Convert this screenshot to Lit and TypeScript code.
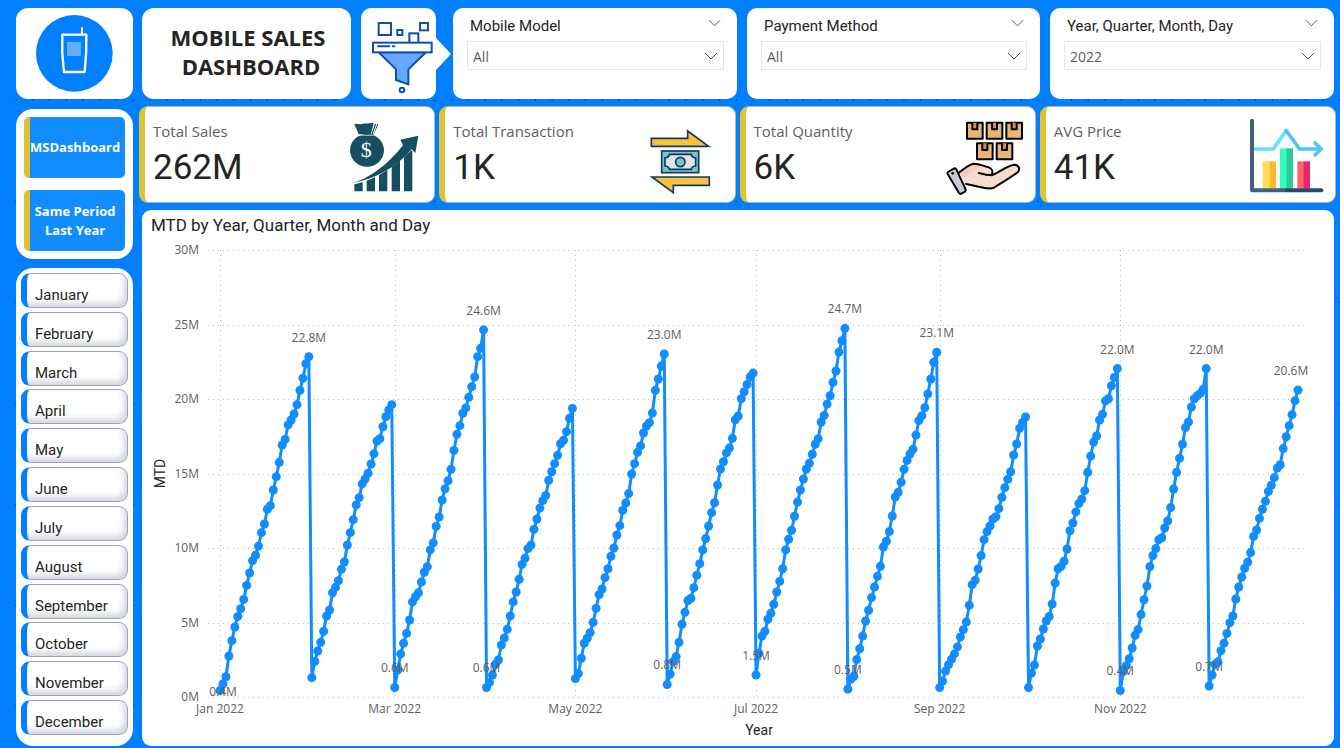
import { LitElement, html, svg, css } from "lit";
import { customElement, property, state } from "lit/decorators.js";

/* Month-to-date sales in millions, one row per month of 2022. */
const MTD: number[][] = [
  [0.43, 0.87, 1.36, 2.75, 3.78, 4.7, 5.41, 5.93, 6.55, 7.49, 8.32, 9.15, 9.51, 10.13, 11.03, 11.61, 12.6, 12.84, 13.89, 14.79, 15.75, 16.91, 17.29, 18.26, 18.59, 18.99, 19.62, 20.58, 21.39, 22.37, 22.84],
  [1.3, 2.39, 3.09, 3.67, 4.41, 5.44, 5.84, 7.0, 7.36, 7.81, 8.57, 9.06, 10.2, 11.03, 11.9, 12.89, 13.38, 14.3, 14.63, 15.01, 15.64, 16.33, 17.18, 17.34, 18.14, 18.81, 19.26, 19.62],
  [0.64, 1.81, 2.89, 3.6, 4.27, 5.17, 6.38, 6.73, 7.0, 7.72, 8.37, 8.75, 9.87, 10.34, 11.45, 12.08, 13.22, 13.98, 14.52, 15.28, 16.55, 17.63, 18.21, 19.04, 19.4, 20.11, 20.83, 21.48, 22.84, 23.4, 24.64],
  [0.64, 0.98, 1.48, 2.2, 2.48, 3.49, 3.96, 4.54, 5.44, 6.38, 7.05, 7.9, 8.9, 9.31, 9.96, 10.2, 11.25, 11.95, 12.68, 13.18, 13.53, 14.54, 15.12, 15.66, 16.22, 17.0, 17.23, 17.81, 18.7, 19.37],
  [1.23, 1.57, 2.6, 3.6, 3.94, 4.32, 5.01, 5.95, 6.87, 7.25, 8.01, 8.61, 9.44, 10.0, 10.87, 11.5, 12.53, 13.02, 13.65, 14.97, 15.66, 16.42, 16.85, 17.72, 18.19, 18.41, 19.06, 20.58, 21.34, 22.21, 23.02],
  [0.84, 1.54, 2.37, 2.71, 3.67, 4.88, 5.68, 6.47, 6.62, 7.34, 8.17, 8.95, 9.87, 10.63, 11.48, 12.37, 13.04, 14.23, 15.3, 15.79, 16.38, 16.71, 17.36, 18.61, 18.86, 20.02, 20.49, 20.98, 21.48, 21.74],
  [1.48, 2.93, 4.09, 4.41, 5.21, 5.62, 6.22, 7.05, 7.76, 8.61, 9.87, 10.58, 11.19, 12.13, 13.09, 13.89, 14.63, 15.3, 15.68, 16.29, 16.96, 17.34, 18.46, 18.9, 19.66, 20.22, 21.12, 21.88, 23.15, 23.91, 24.74],
  [0.54, 1.19, 1.39, 2.51, 3.24, 4.09, 5.1, 5.82, 6.67, 7.38, 8.1, 8.77, 10.07, 10.45, 11.1, 12.15, 13.42, 13.74, 14.41, 15.28, 15.88, 16.31, 16.62, 17.58, 18.55, 18.88, 19.42, 20.34, 21.34, 22.46, 23.14],
  [0.63, 1.07, 1.74, 2.17, 2.53, 2.89, 3.36, 4.03, 4.52, 5.03, 6.15, 7.54, 7.83, 8.59, 9.49, 10.56, 11.1, 11.48, 11.95, 12.1, 12.64, 13.4, 14.05, 14.61, 15.12, 16.24, 16.98, 18.03, 18.43, 18.79],
  [0.63, 1.61, 2.15, 3.42, 3.89, 4.56, 5.1, 5.41, 6.24, 7.65, 8.61, 8.77, 9.11, 9.93, 11.16, 11.68, 12.42, 12.98, 13.29, 13.85, 15.08, 16.17, 17.11, 17.52, 18.59, 18.97, 19.87, 20.02, 20.89, 21.45, 22.04],
  [0.44, 1.7, 2.1, 2.57, 3.29, 4.14, 4.52, 5.53, 6.53, 7.45, 8.75, 9.49, 9.96, 10.56, 10.69, 11.34, 11.81, 12.71, 13.96, 15.08, 16.02, 16.96, 18.08, 18.46, 19.46, 20.02, 20.22, 20.38, 20.65, 22.04],
  [0.74, 1.48, 2.19, 2.37, 3.11, 3.6, 4.27, 4.99, 5.44, 6.58, 7.38, 8.05, 8.64, 9.04, 9.69, 10.78, 11.21, 11.99, 12.6, 13.13, 13.8, 14.21, 14.72, 15.37, 15.59, 16.67, 17.47, 18.21, 18.95, 19.89, 20.6],
];
const DAYS = MTD.flat();
const LABELLED = [30, 59, 89, 90, 150, 151, 181, 211, 212, 242, 303, 304, 333, 334, 364];
const X_TICKS: [number, string][] = [
  [0, "Jan 2022"], [59, "Mar 2022"], [120, "May 2022"],
  [181, "Jul 2022"], [243, "Sep 2022"], [304, "Nov 2022"],
];
const MONTHS = ["January", "February", "March", "April", "May", "June", "July",
  "August", "September", "October", "November", "December"];

const chevron = (w: number) => html`<svg class="chev" width=${w} height="8" viewBox="0 0 14 8" aria-hidden="true">
  <path d="M1 1 L7 7 L13 1" fill="none" stroke="#44505c" stroke-width="1"/></svg>`;

const phoneIcon = svg`
  <circle cx="223" cy="160" r="115" fill="#007fff"/>
  <path d="M187 104 H259 Q260 160 254 216 H192 Q184 160 187 104 Z" fill="none" stroke="#fff" stroke-width="7" stroke-linejoin="round"/>
  <path d="M246 104 V85" stroke="#fff" stroke-width="6" stroke-linecap="round"/>
  <rect x="201" y="126" width="42" height="42" fill="#66adf5"/>`;

const funnelIcon = svg`
  <g fill="#fff" stroke="#0d4fb0" stroke-width="6">
    <rect x="1136" y="69" width="37" height="36"/>
    <rect x="1192" y="90" width="15" height="15"/>
    <rect x="1260" y="69" width="24" height="22"/>
    <rect x="1228" y="100" width="27" height="30"/>
    <path d="M1136 157 L1188 208 V240 L1225 253 V208 L1278 157 Z" fill="#66a8ff"/>
    <rect x="1119" y="128" width="176" height="29"/>
    <circle cx="1206" cy="270" r="7"/>
  </g>
  <path d="M1134 139 H1168 M1178 139 H1183" stroke="#0d4fb0" stroke-width="6" stroke-linecap="round"/>`;

const moneyIcon = svg`
  <g fill="#164f60">
    <path d="M46 44 C54 37 60 45 68 42 C76 39 88 41 104 38 L96 73 H58 C58 63 50 55 46 44 Z"/>
    <path d="M108 41 L118 43 L103 76 L97 74 Z"/>
    <ellipse cx="84" cy="121" rx="51" ry="49"/>
    <path d="M36 220 C90 208 150 160 192 106 L184 89 L238 77 L229 129 L218 118 C175 170 110 208 36 220 Z"/>
    <path d="M46 223 Q60 220 71 216 V244 H46 Z"/>
    <path d="M83 212 Q97 207 108 201 V244 H83 Z"/>
    <path d="M120 195 Q134 188 145 180 V244 H120 Z"/>
    <path d="M158 171 Q172 162 183 151 V244 H158 Z"/>
    <path d="M195 142 L218 121 L220 124 V244 H195 Z"/>
  </g>
  <path d="M57 76 H103" stroke="#fff" stroke-width="2"/>
  <path d="M103 72 L113 42" stroke="#fff" stroke-width="3"/>
  <text x="82" y="142" font-family="Liberation Serif, serif" font-size="66" text-anchor="middle" fill="#fff">$</text>`;

const swapIcon = svg`
  <g stroke="#0d3b66" stroke-width="5">
    <path d="M604 415 H713 V393 L776 439 H604 Z" fill="#fbc13c"/>
    <path d="M778 531 H606 L670 578 V556 H778 Z" fill="#fbc13c"/>
    <rect x="635" y="453" width="111" height="65" fill="#7ac7c0"/>
    <path d="M658 463 H724 Q724 472 737 474 V498 Q724 500 724 508 H658 Q658 500 645 498 V474 Q658 472 658 463 Z" fill="#dfe3e8"/>
    <circle cx="691" cy="486" r="14" fill="#7ac7c0"/>
  </g>`;

const carton = (x: number, y: number) => svg`
  <g stroke="#000" stroke-width="6" stroke-linejoin="round">
    <rect x=${x} y=${y} width="47" height="48" fill="#e9b574"/>
    <path d=${`M${x + 16} ${y} V${y + 20} H${x + 31} V${y}`} fill="#cf8f5b"/>
  </g>`;
const handIcon = svg`
  ${carton(81, 38)}${carton(140, 38)}${carton(199, 38)}${carton(111, 100)}${carton(170, 100)}
  <path d="M58 187 C74 176 88 161 103 161 C120 162 132 168 146 172 C157 176 159 184 155 196 C170 190 203 168 219 165 C235 162 242 176 234 186 C212 203 182 220 160 234 C140 240 115 228 78 222 Z" fill="#f5dccf"/>
  <path d="M60 187 C76 176 88 163 103 163 L122 168 L68 206 Z" fill="#f5cbbd"/>
  <path d="M58 187 C74 176 88 161 103 161 C120 162 132 168 146 172 C159 177 159 184 155 195 C142 197 128 192 116 189 M155 196 C170 190 203 168 219 165 C235 162 242 176 234 186 C212 203 182 220 160 234 C140 240 115 228 78 222" fill="none" stroke="#000" stroke-width="6" stroke-linecap="round" stroke-linejoin="round"/>
  <path d="M24 186 L43 175 Q47 174 49 178 L77 238 Q78 243 75 245 L64 251 Q60 253 57 249 L23 192 Q21 188 24 186 Z" fill="#c9cbd3" stroke="#000" stroke-width="6" stroke-linejoin="round"/>
  <circle cx="38" cy="190" r="4" fill="#000"/>`;

const barsIcon = svg`
  <rect x="1121" y="484" width="20" height="82" fill="#ffdf4f"/><rect x="1141" y="484" width="20" height="82" fill="#ffb52e"/>
  <rect x="1173" y="445" width="20" height="121" fill="#33ffbb"/><rect x="1192" y="445" width="20" height="121" fill="#29cc96"/>
  <rect x="1225" y="484" width="20" height="82" fill="#ff6464"/><rect x="1244" y="484" width="19" height="82" fill="#e6286b"/>
  <path d="M1095 447 H1153 L1192 391" fill="none" stroke="#66e0ff" stroke-width="11"/>
  <path d="M1191 391 L1232 447 H1294 M1278 429 L1296 447 L1278 465" fill="none" stroke="#4dc3ff" stroke-width="11" stroke-linecap="round"/>
  <path d="M1089 362 V571 H1194" fill="none" stroke="#41607f" stroke-width="12" stroke-linecap="round" stroke-linejoin="round"/>
  <path d="M1194 571 H1297" stroke="#2b4a66" stroke-width="12" stroke-linecap="round"/>`;

const KPIS = [
  { name: "Total Sales", value: "262M", box: "15 0 240 270", icon: moneyIcon },
  { name: "Total Transaction", value: "1K", box: "585 330 240 270", icon: swapIcon },
  { name: "Total Quantity", value: "6K", box: "15 0 240 270", icon: handIcon },
  { name: "AVG Price", value: "41K", box: "1068 330 240 270", icon: barsIcon },
];
const SLICERS = [
  { id: "model", name: "Mobile Model", value: "All" },
  { id: "payment", name: "Payment Method", value: "All" },
  { id: "date", name: "Year, Quarter, Month, Day", value: "2022" },
];

@customElement("mtd-chart")
export class MtdChart extends LitElement {
  static styles = css`
    :host { display: block; min-height: 0; overflow: hidden; }
    .plot { display: block; width: 100%; height: 100%; }
    .grid { stroke: #bdbdbd; stroke-width: 1; stroke-dasharray: 1 4; }
    .line { fill: none; stroke: #118dff; stroke-width: 3; stroke-linejoin: round; }
    .dot { fill: #118dff; }
    .tick { fill: #605e5c; font: 12px "Open Sans", "Noto Sans", sans-serif; }
    .axis { fill: #252423; font: 14px Roboto, sans-serif; }
    .mid { text-anchor: middle; }
    .end { text-anchor: end; }
  `;
  @state() private w = 1192;
  @state() private h = 508;
  private observer = new ResizeObserver(() => this.measure());

  connectedCallback() {
    super.connectedCallback();
    this.observer.observe(this);
  }
  disconnectedCallback() {
    this.observer.disconnect();
    super.disconnectedCallback();
  }
  private measure() {
    if (this.clientWidth && this.clientHeight) {
      this.w = this.clientWidth;
      this.h = this.clientHeight;
    }
  }

  render() {
    const left = 78, right = this.w - 36, top = 12, bottom = this.h - 49;
    const x = (d: number) => left + (d / 364) * (right - left);
    const y = (v: number) => bottom - (v / 30) * (bottom - top);
    const midY = (top + bottom) / 2;
    return html`
      <svg class="plot" role="img" aria-label="MTD by Year, Quarter, Month and Day">
        ${[0, 5, 10, 15, 20, 25, 30].map((v) => svg`
          <line class="grid" x1="66" x2=${this.w - 27} y1=${Math.round(y(v)) + 0.5} y2=${Math.round(y(v)) + 0.5}/>
          <text class="tick end" x="57" y=${y(v) + 4}>${v}M</text>`)}
        ${X_TICKS.map(([d, name]) => svg`
          <line class="grid" x1=${Math.round(x(d)) + 0.5} x2=${Math.round(x(d)) + 0.5} y1=${top} y2=${bottom}/>
          <text class="tick mid" x=${x(d)} y=${bottom + 16}>${name}</text>`)}
        <polyline class="line" points=${DAYS.map((v, i) => `${x(i)},${y(v)}`).join(" ")}/>
        ${DAYS.map((v, i) => svg`<circle class="dot" cx=${x(i)} cy=${y(v)} r="4.5"/>`)}
        <text class="tick mid" x=${left + 3} y=${y(DAYS[0]) + 5}>${DAYS[0].toFixed(1)}M</text>
        ${LABELLED.map((i) => svg`
          <text class="tick mid" x=${Math.min(x(i), this.w - 43)} y=${y(DAYS[i]) - 15}>${DAYS[i].toFixed(1)}M</text>`)}
        <text class="axis mid" transform=${`translate(23 ${midY}) rotate(-90)`}>MTD</text>
        <text class="axis mid" x=${(left + right) / 2} y=${bottom + 38}>Year</text>
      </svg>`;
  }
}

@customElement("kpi-card")
export class KpiCard extends LitElement {
  static styles = css`
    :host { display: block; min-width: 0; }
    .card {
      box-sizing: border-box; height: 97px; display: flex; justify-content: space-between; align-items: center;
      padding: 0 10px 0 8px; background: #fff; border: 1px solid #b3b3b3; border-left: 6px solid #e0c234;
      border-radius: 9px; overflow: hidden;
    }
    .name { font: 15px/22px "Open Sans", "Noto Sans", sans-serif; color: #605e5c; white-space: nowrap; }
    .value { margin: 0; font: 35px/42px Roboto, sans-serif; color: #252423; }
    .text { padding-bottom: 1px; display: grid; gap: 5px; }
  `;
  @property({ attribute: false }) kpi = KPIS[0];
  render() {
    return html`<article class="card">
      <div class="text"><span class="name">${this.kpi.name}</span><p class="value">${this.kpi.value}</p></div>
      <svg width="80" height="90" viewBox=${this.kpi.box} aria-hidden="true">${this.kpi.icon}</svg>
    </article>`;
  }
}

@customElement("app-root")
export class AppRoot extends LitElement {
  static styles = css`
    :host {
      display: block; box-sizing: border-box; min-height: 100vh; padding: 8px 4px 2px 16px;
      font-family: Roboto, sans-serif; color: #252423; background-color: #007fff;
      background-image: radial-gradient(circle at 100% 100%, #063a78 1px, transparent 2px);
      background-size: 1.25% 101px;
    }
    .page { display: grid; grid-template-columns: 117px minmax(0, 1fr); column-gap: 6px; min-height: calc(100vh - 10px); }
    .side { display: flex; flex-direction: column; gap: 9px; }
    .main { display: flex; flex-direction: column; gap: 7px; min-width: 0; }
    .logo { height: 91px; background: #fff; border-radius: 12px; }
    .logo svg, .funnel svg { display: block; }
    .nav, .months { background: #fff; border-radius: 17px; }
    .nav { margin-top: 1px; padding: 8px; display: grid; gap: 12px; }
    .page-btn {
      height: 61px; border: 0; border-left: 6px solid #dcc136; border-radius: 5px; background: #118dff; color: #fff;
      padding: 0 5px 0 0; font: bold 13px/19px "Open Sans", "Noto Sans", sans-serif; text-align: center;
    }
    .months { flex: 1; padding: 5px 5px 11px; display: flex; flex-direction: column; justify-content: space-between; gap: 3px; }
    .month {
      box-sizing: border-box; height: 35px; padding: 9px 0 0 8px; text-align: left; color: #252423;
      border: 1px solid #9aa1b9; border-left: 6px solid #007fff; border-radius: 9px; background: #fff;
      box-shadow: inset -3px -4px 6px #d3d5de; font: 15px/18px Roboto, sans-serif;
    }
    .top { display: flex; padding: 0 2px 0 3px; }
    .title {
      flex: none; width: 209px; height: 91px; margin: 0; padding: 0 0 4px 3px; box-sizing: border-box; display: grid;
      place-content: center; text-align: center; background: #fff; border-radius: 12px;
      font: bold 22px/29px "Open Sans", "Noto Sans", sans-serif;
    }
    .title span:last-child { padding-left: 6px; }
    .funnel { flex: none; display: flex; align-items: center; margin: 0 2px 0 10px; }
    .funnel-card { width: 75px; height: 91px; background: #fff; border-radius: 10px; }
    .slicers { flex: 1; display: grid; grid-template-columns: 284fr 293fr 284fr; gap: 10px; min-width: 0; }
    .slicer { box-sizing: border-box; height: 91px; padding: 0 13px 0 14px; background: #fff; border-radius: 10px; }
    .slicer-head { display: flex; justify-content: space-between; height: 33px; padding: 0 3px; }
    .slicer-head label { font-size: 15px; line-height: 36px; white-space: nowrap; }
    .more { align-self: flex-start; border: 0; background: none; padding: 11px 0 0; line-height: 0; }
    .field { display: grid; align-items: center; }
    .field select, .field .chev { grid-area: 1 / 1; }
    .field .chev { justify-self: end; margin-right: 6px; pointer-events: none; }
    .field select {
      appearance: none; width: 100%; height: 29px; padding: 1px 5px 0; border: 1px solid #e6e6e6; border-radius: 0;
      background: #fff; color: #605e5c; font: 14px "Open Sans", "Noto Sans", sans-serif;
    }
    .kpis { display: grid; grid-template-columns: repeat(4, minmax(0, 1fr)); gap: 4px; }
    .chart {
      flex: 1; display: flex; flex-direction: column; margin: 0 2px 0 3px; background: #fff;
      border-radius: 9px; min-height: 0;
    }
    .chart h2 { margin: 0; padding: 3px 9px 1px; font: 17px/24px Roboto, sans-serif; }
    .chart mtd-chart { flex: 1 1 400px; }
  `;

  render() {
    return html`<div class="page">
      <aside class="side">
        <div class="logo"><svg width="117" height="91" viewBox="48 24 351 273" role="img" aria-label="Phone">${phoneIcon}</svg></div>
        <nav class="nav">
          <button class="page-btn">MSDashboard</button>
          <button class="page-btn">Same Period<br>Last Year</button>
        </nav>
        <div class="months" role="group" aria-label="Month">
          ${MONTHS.map((m) => html`<button class="month">${m}</button>`)}
        </div>
      </aside>
      <main class="main">
        <header class="top">
          <h1 class="title"><span>MOBILE SALES</span><span>DASHBOARD</span></h1>
          <div class="funnel">
            <div class="funnel-card"><svg width="75" height="91" viewBox="1083 24 225 273" aria-hidden="true">${funnelIcon}</svg></div>
            <svg width="15" height="32" viewBox="0 0 15 32" aria-hidden="true"><path d="M0 0 L15 16 L0 32 Z" fill="#fff"/></svg>
          </div>
          <div class="slicers">
            ${SLICERS.map((s) => html`<section class="slicer">
              <div class="slicer-head">
                <label for=${s.id}>${s.name}</label>
                <button class="more" aria-label=${s.name}>${chevron(13)}</button>
              </div>
              <div class="field">
                <select id=${s.id}><option>${s.value}</option></select>
                ${chevron(14)}
              </div>
            </section>`)}
          </div>
        </header>
        <div class="kpis">${KPIS.map((k) => html`<kpi-card .kpi=${k}></kpi-card>`)}</div>
        <section class="chart">
          <h2>MTD by Year, Quarter, Month and Day</h2>
          <mtd-chart></mtd-chart>
        </section>
      </main>
    </div>`;
  }
}
